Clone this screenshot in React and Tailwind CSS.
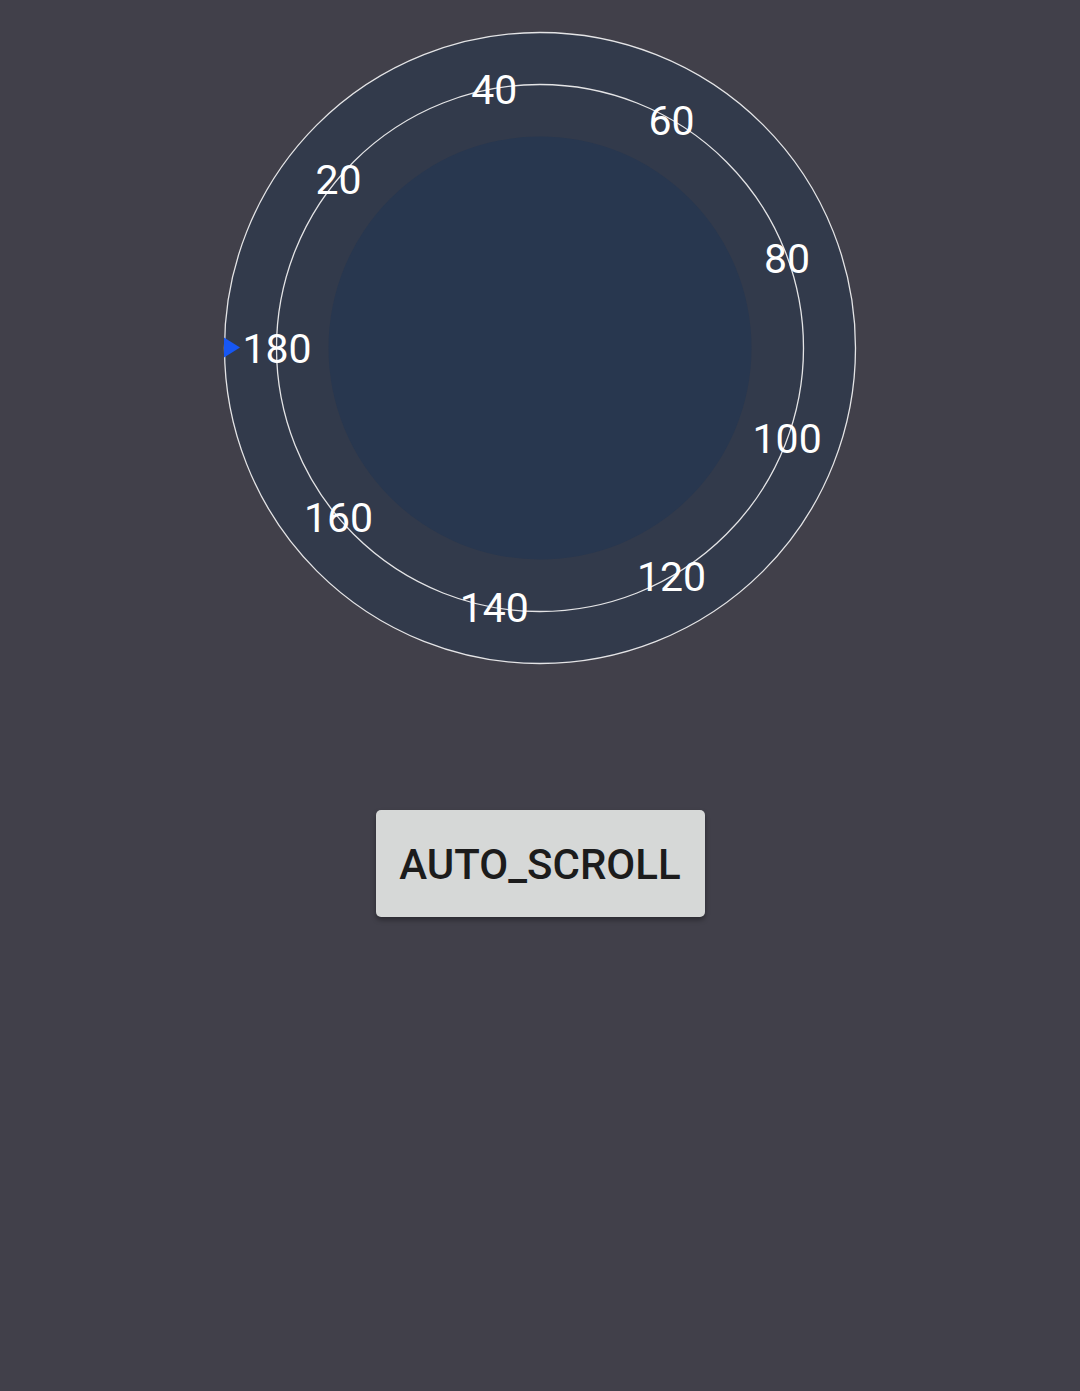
import React from "react";

const labels = [
  { t: "180", a: 180 },
  { t: "20", a: 220 },
  { t: "40", a: 260 },
  { t: "60", a: 300 },
  { t: "80", a: 340 },
  { t: "100", a: 20 },
  { t: "120", a: 60 },
  { t: "140", a: 100 },
  { t: "160", a: 140 },
];

function Dial() {
  const c = 320;
  const r = 263;
  return (
    <svg width="640" height="640" viewBox="0 0 640 640" className="block">
      <circle cx={c} cy={c} r="315.5" fill="#323a4b" stroke="#e4e4e6" strokeWidth="1.3" />
      <circle cx={c} cy={c} r="211.5" fill="#28374f" />
      <circle cx={c} cy={c} r="263.5" fill="none" stroke="#e4e4e6" strokeWidth="1.3" />
      {labels.map((l) => {
        const rad = (l.a * Math.PI) / 180;
        const x = c + r * Math.cos(rad);
        const y = c + r * Math.sin(rad);
        return (
          <text
            key={l.t}
            x={x}
            y={y + 15}
            textAnchor="middle"
            fill="#ffffff"
            style={{ fontFamily: "Roboto, sans-serif", fontSize: "41px" }}
          >
            {l.t}
          </text>
        );
      })}
      <polygon points="4,309.5 20,319.5 4,329.5" fill="#1757f4" />
    </svg>
  );
}

export default function App() {
  return (
    <div className="w-[1080px] h-[1391px] bg-[#41404a] flex flex-col items-center">
      <div className="mt-[28px]">
        <Dial />
      </div>
      <button className="mt-[142px] w-[329px] h-[107px] pt-[3px] bg-[#d6d8d7] rounded-[5px] shadow-[0_3px_5px_rgba(0,0,0,0.35)] text-[#1c1c1c] font-[Roboto,sans-serif] font-medium text-[42px] leading-none flex items-center justify-center">
        AUTO_SCROLL
      </button>
    </div>
  );
}
